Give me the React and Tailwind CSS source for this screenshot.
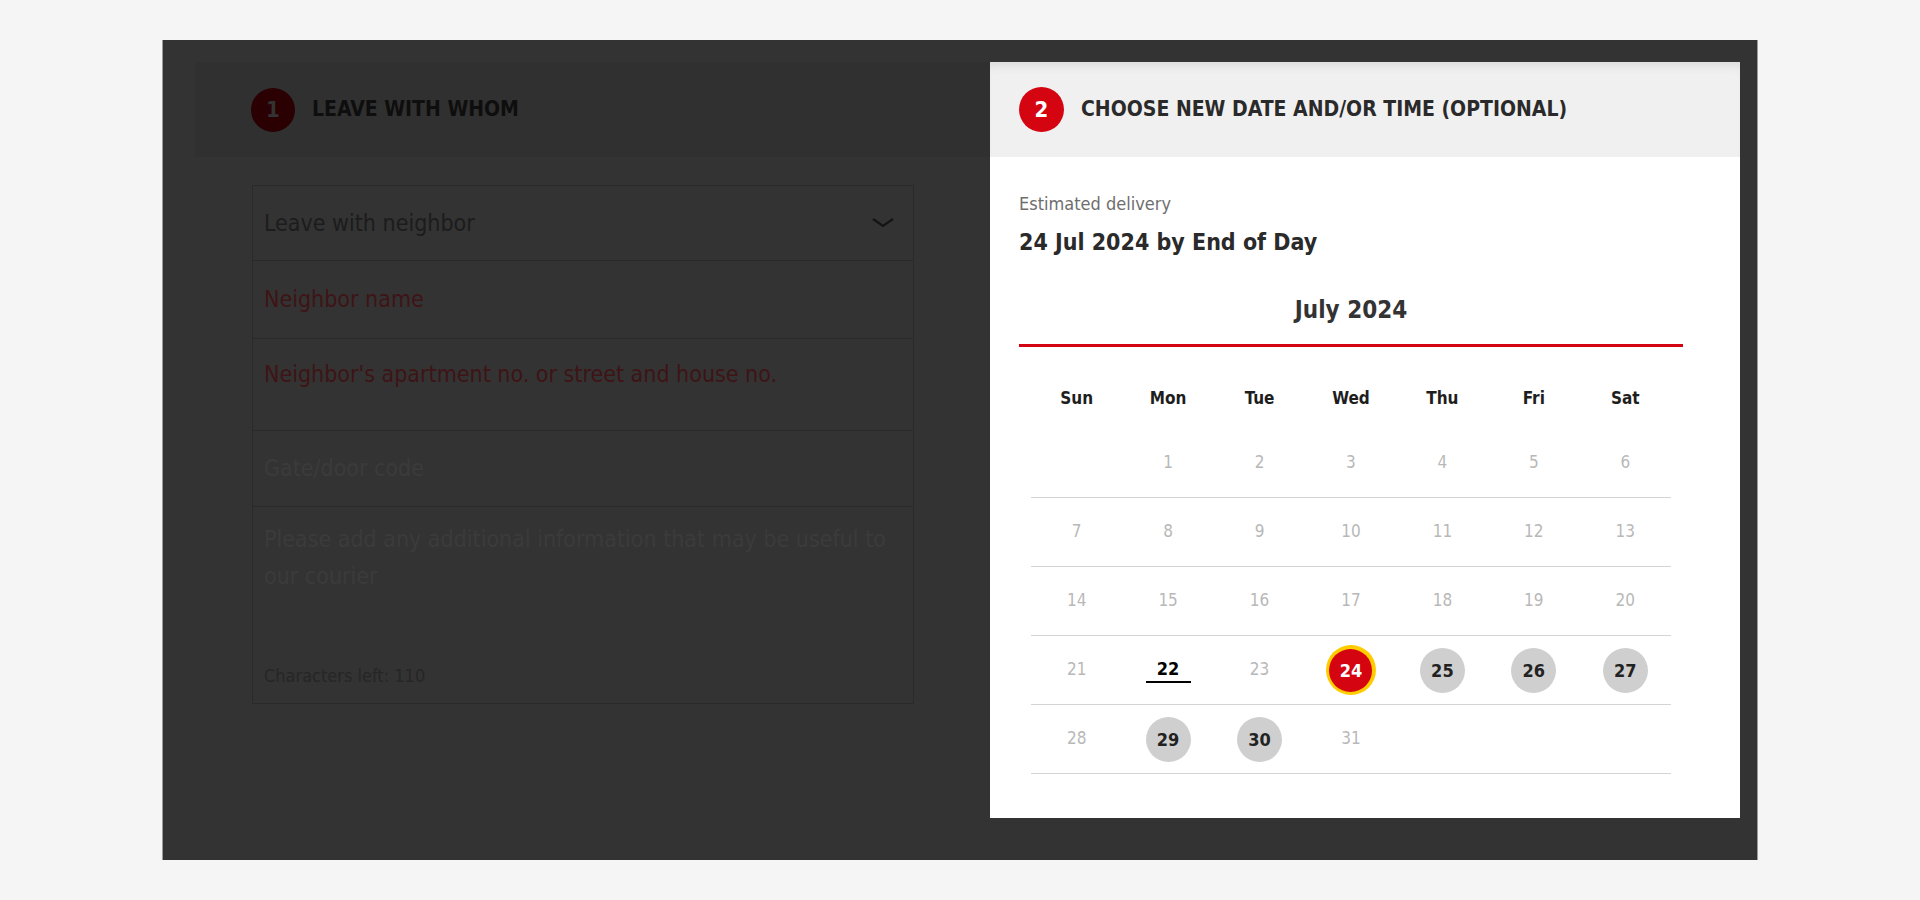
import React from "react";

const narrow = { fontFamily: '"Liberation Sans Narrow", "DejaVu Sans Condensed", "Liberation Sans", sans-serif' };

const weekdays = ["Sun", "Mon", "Tue", "Wed", "Thu", "Fri", "Sat"];

// null = empty cell
const weeks = [
  [null, 1, 2, 3, 4, 5, 6],
  [7, 8, 9, 10, 11, 12, 13],
  [14, 15, 16, 17, 18, 19, 20],
  [21, 22, 23, 24, 25, 26, 27],
  [28, 29, 30, 31, null, null, null],
];

const available = [25, 26, 27, 29, 30];

const DayCell = ({ day }) => {
  if (day === null) return <div className="flex-1" />;

  if (day === 24) {
    return (
      <div className="flex-1 flex items-center justify-center">
        <div className="w-[50px] h-[50px] rounded-full bg-[#ffcc00] flex items-center justify-center">
          <div className="w-[43px] h-[43px] rounded-full bg-[#d40511] text-white font-bold text-[18px] flex items-center justify-center">
            24
          </div>
        </div>
      </div>
    );
  }

  if (day === 22) {
    return (
      <div className="flex-1 flex items-center justify-center">
        <div className="flex flex-col items-center">
          <span className="font-bold text-[18px] text-black leading-[22px]">22</span>
          <span className="block w-[45px] h-[2px] bg-black mt-[1px]" />
        </div>
      </div>
    );
  }

  if (available.includes(day)) {
    return (
      <div className="flex-1 flex items-center justify-center">
        <div className="w-[45px] h-[45px] rounded-full bg-[#cfcfcf] text-[#222] font-bold text-[18px] flex items-center justify-center">
          {day}
        </div>
      </div>
    );
  }

  return (
    <div className="flex-1 flex items-center justify-center text-[17px] font-light text-[#b8b8b8]">
      {day}
    </div>
  );
};

const App = () => {
  return (
    <div className="min-h-screen bg-[#f5f5f5] pt-[40px] pl-[162px]" style={narrow}>
      <div className="w-[1596px] h-[820px] bg-[#333333] border-x border-[#9a9a9a] flex pl-[32px] pt-[22px]">
        {/* left, dimmed part */}
        <div className="w-[795px] flex flex-col">
          <div className="h-[95px] bg-[#303030] flex items-center pl-[56px] gap-[17px]">
            <div className="w-[44px] h-[44px] rounded-full bg-[#2a0002] flex items-center justify-center text-[#333] font-bold text-[22px]">
              1
            </div>
            <h2 className="text-[21px] font-bold text-[#0e0e0e]">LEAVE WITH WHOM</h2>
          </div>

          <div className="ml-[57px] mt-[28px] w-[662px] flex flex-col text-[23px]">
            <div className="h-[76px] border border-[#2a2a2a] flex items-center justify-between pl-[11px] pr-[18px] text-[#1c1c1c]">
              <span>Leave with neighbor</span>
              <svg width="24" height="12" viewBox="0 0 24 12" fill="none">
                <path d="M2 2 L12 9 L22 2" stroke="#141414" strokeWidth="2.2" />
              </svg>
            </div>
            <div className="h-[78px] border border-t-0 border-[#2a2a2a] flex items-center pl-[11px] text-[#3e1416]">
              Neighbor name
            </div>
            <div className="h-[92px] border border-t-0 border-[#2a2a2a] pl-[11px] pt-[18px] text-[#3e1416]">
              Neighbor's apartment no. or street and house no.
            </div>
            <div className="h-[76px] border border-t-0 border-[#2a2a2a] flex items-center pl-[11px] text-[#3b3b3b]">
              Gate/door code
            </div>
            <div className="h-[197px] border border-t-0 border-[#2a2a2a] pl-[11px] pr-[16px] pt-[14px] flex flex-col text-[#3b3b3b]">
              <p className="leading-[37px]">
                Please add any additional information that may be useful to our courier
              </p>
              <p className="mt-auto mb-[14px] text-[18px] text-[#262626]">Characters left: 110</p>
            </div>
          </div>
        </div>

        {/* right, highlighted card */}
        <div className="w-[750px] h-[756px] bg-white flex flex-col">
          <div className="h-[95px] bg-[#f0f0f0] shadow-[inset_0_10px_12px_-8px_rgba(0,0,0,0.12)] flex items-center pl-[29px] gap-[17px]">
            <div className="w-[45px] h-[45px] rounded-full bg-[#d40511] flex items-center justify-center text-white font-bold text-[22px]">
              2
            </div>
            <h2 className="text-[21px] font-bold text-[#2a2a2a]">CHOOSE NEW DATE AND/OR TIME (OPTIONAL)</h2>
          </div>

          <div className="pl-[29px] pr-[57px] pt-[36px]">
            <p className="text-[18px] font-light text-[#6e6e6e] leading-[22px]">Estimated delivery</p>
            <p className="mt-[12px] text-[23px] font-bold text-[#2a2a2a] leading-[30px]">24 Jul 2024 by End of Day</p>

            <p className="mt-[38px] text-center text-[24px] font-bold text-[#333] leading-[30px]">July 2024</p>
            <div className="mt-[19px] h-[3px] bg-[#d40511]" />

            <div className="mx-[12px]">
              <div className="flex pt-[36px] pb-[16px]">
                {weekdays.map((d) => (
                  <div key={d} className="flex-1 text-center text-[17px] font-bold text-[#1e1e1e] leading-[30px]">
                    {d}
                  </div>
                ))}
              </div>
              {weeks.map((week, i) => (
                <div key={i} className="flex h-[69px] border-b border-[#d4d4d4]">
                  {week.map((day, j) => (
                    <DayCell key={j} day={day} />
                  ))}
                </div>
              ))}
            </div>
          </div>
        </div>
      </div>
    </div>
  );
};

export default App;
